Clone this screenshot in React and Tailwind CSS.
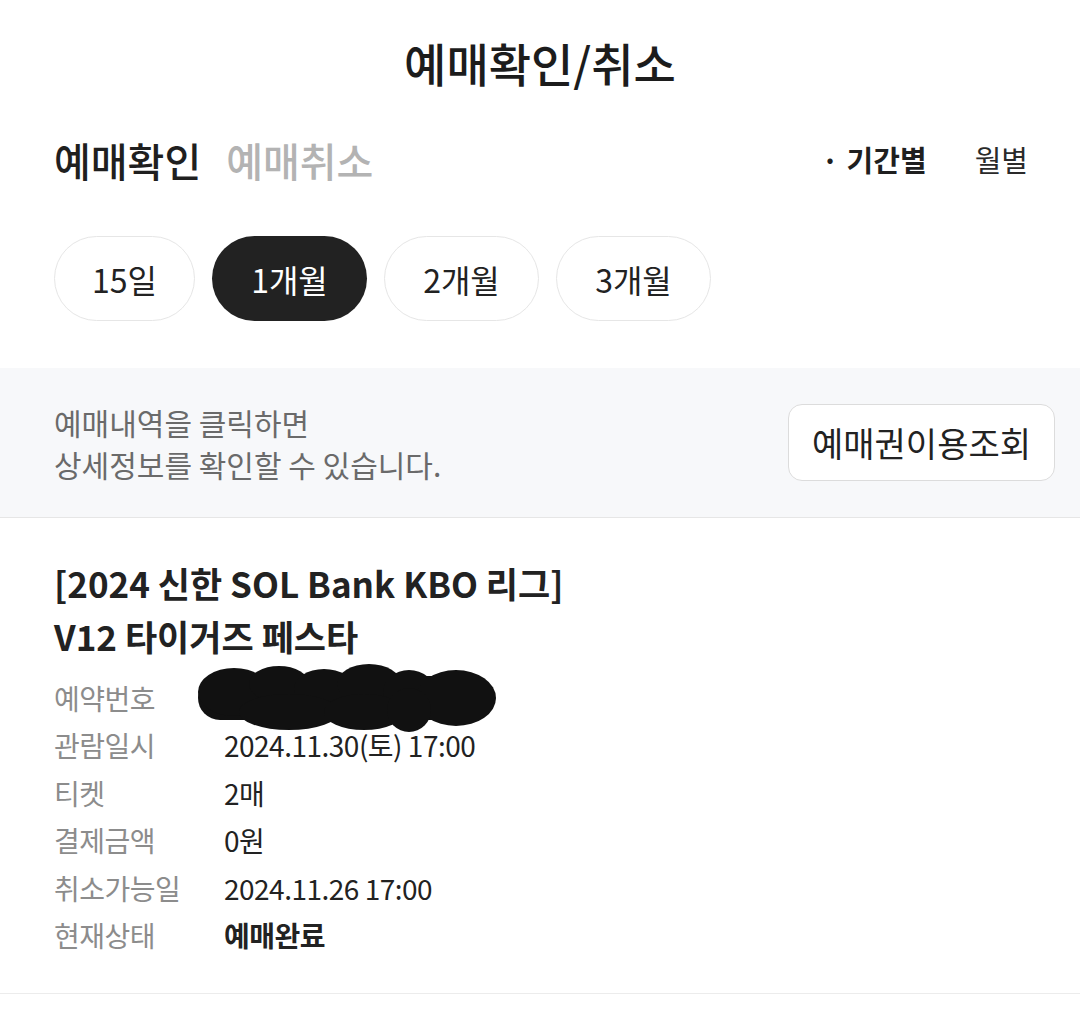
import React from "react";

const periods = ["15일", "1개월", "2개월", "3개월"];

const rows = [
  { label: "예약번호", value: "", hidden: true },
  { label: "관람일시", value: "2024.11.30(토) 17:00" },
  { label: "티켓", value: "2매" },
  { label: "결제금액", value: "0원" },
  { label: "취소가능일", value: "2024.11.26 17:00" },
  { label: "현재상태", value: "예매완료", bold: true },
];

// scribble that hides the reservation number
const Redaction = () => (
  <svg
    className="absolute left-[-30px] top-[-36px]"
    width="305"
    height="72"
    viewBox="0 0 305 72"
  >
    <g fill="#111">
      <rect x="4" y="14" width="292" height="44" rx="22" />
      <ellipse cx="40" cy="30" rx="36" ry="24" />
      <ellipse cx="85" cy="22" rx="30" ry="18" />
      <ellipse cx="130" cy="27" rx="30" ry="20" />
      <ellipse cx="175" cy="22" rx="32" ry="20" />
      <ellipse cx="215" cy="30" rx="26" ry="22" />
      <ellipse cx="262" cy="36" rx="40" ry="28" />
      <ellipse cx="95" cy="50" rx="50" ry="18" />
      <ellipse cx="170" cy="50" rx="40" ry="18" />
      <ellipse cx="215" cy="48" rx="22" ry="22" />
    </g>
  </svg>
);

function App() {
  return (
    <div
      className="w-[1080px] min-h-[1016px] bg-white text-[#222]"
      style={{ fontFamily: '"Noto Sans CJK KR", "Noto Sans", sans-serif' }}
    >
      {/* Header */}
      <header className="h-[124px] flex items-center justify-center">
        <h1 className="text-[46px] font-medium text-[#1c1c1c]">예매확인/취소</h1>
      </header>

      {/* Tabs */}
      <div className="h-[72px] flex items-center justify-between pl-[54px] pr-[52px]">
        <div className="flex items-center gap-[25px] text-[40px] font-medium">
          <span className="text-[#1f1f1f]">예매확인</span>
          <span className="text-[#b3b3b3]">예매취소</span>
        </div>
        <div className="flex items-center gap-[48px] text-[29px]">
          <span className="font-bold text-[#1f1f1f]">
            <span className="mr-[8px]">·</span>기간별
          </span>
          <span className="text-[#2a2a2a]">월별</span>
        </div>
      </div>

      {/* Period pills */}
      <div className="mt-[40px] flex gap-[17px] px-[54px]">
        {periods.map((p, i) => (
          <button
            key={p}
            className={
              i === 1
                ? "h-[85px] w-[155px] rounded-full bg-[#222] text-white text-[32px]"
                : i === 0
                ? "h-[85px] w-[141px] rounded-full border border-[#e6e6e6] bg-white text-[#222] text-[32px]"
                : "h-[85px] w-[155px] rounded-full border border-[#e6e6e6] bg-white text-[#222] text-[32px]"
            }
          >
            {p}
          </button>
        ))}
      </div>

      {/* Info box */}
      <div className="mt-[47px] h-[150px] bg-[#f7f8fa] border-b border-[#e6e6e6] flex items-center justify-between pl-[54px] pr-[25px]">
        <p className="text-[30px] leading-[42px] text-[#6a6a6a]">
          예매내역을 클릭하면
          <br />
          상세정보를 확인할 수 있습니다.
        </p>
        <button className="h-[77px] w-[267px] rounded-[14px] border border-[#dcdcdc] bg-white text-[34px] text-[#222]">
          예매권이용조회
        </button>
      </div>

      {/* Reservation card */}
      <div className="pt-[38px] pb-[34px] px-[54px] border-b border-[#ececec]">
        <h2 className="text-[35px] leading-[53px] font-bold text-[#222]">
          [2024 신한 SOL Bank KBO 리그]
          <br />
          V12 타이거즈 페스타
        </h2>
        <div className="mt-[12px]">
          {rows.map((r) => (
            <div key={r.label} className="flex h-[47.5px] items-center">
              <span className="w-[170px] text-[28px] tracking-[-0.5px] text-[#8c8c8c]">
                {r.label}
              </span>
              <span
                className={
                  r.bold
                    ? "relative text-[28px] font-bold tracking-[-0.5px] text-[#222]"
                    : "relative text-[28px] tracking-[-0.5px] text-[#222]"
                }
              >
                {r.hidden ? <Redaction /> : r.value}
              </span>
            </div>
          ))}
        </div>
      </div>
    </div>
  );
}

export default App;
